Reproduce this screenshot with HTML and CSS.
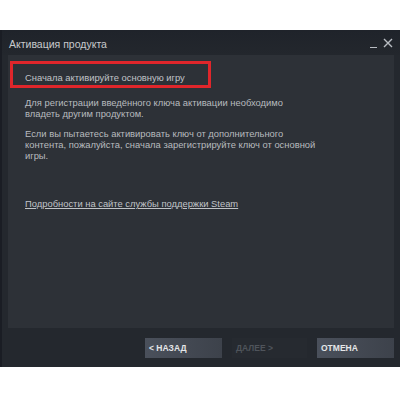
FILE: index.html
```html
<!DOCTYPE html>
<html lang="ru">

<head>
  <meta charset="UTF-8">
  <title>Активация продукта</title>
  <link rel="stylesheet" href="styles.css">
</head>

<body>
  <div class="dialog">
    <div class="title-bar">
      <span class="title">Активация продукта</span>
      <div class="window-btns">
        <span class="min-btn"></span>
        <svg class="close-btn" width="10" height="10" viewBox="0 0 10 10">
          <path d="M1 1 L9 9 M9 1 L1 9" stroke="#b8bcc2" stroke-width="1.4" fill="none" />
        </svg>
      </div>
    </div>

    <div class="panel">
      <div class="error-box">Сначала активируйте основную игру</div>
      <p>Для регистрации введённого ключа активации необходимо<br>владеть другим продуктом.</p>
      <p>Если вы пытаетесь активировать ключ от дополнительного<br>контента, пожалуйста, сначала зарегистрируйте ключ от основной<br>игры.</p>
      <a class="support-link" href="#">Подробности на сайте службы поддержки Steam</a>
    </div>

    <div class="footer">
      <button class="btn">&lt; НАЗАД</button>
      <button class="btn btn-disabled">ДАЛЕЕ &gt;</button>
      <button class="btn">ОТМЕНА</button>
    </div>
  </div>
</body>

</html>
```

FILE: styles.css
```css
body {
  margin: 0;
  background-color: #ffffff;
  font-family: Arial, "Liberation Sans", sans-serif;
  padding-top: 30px;
}

.dialog {
  width: 400px;
  height: 337px;
  background-color: #24282e;
  border-left: 2px solid #1a1d24;
  box-sizing: border-box;
  display: flex;
  flex-direction: column;
}

.title-bar {
  height: 25px;
  display: flex;
  align-items: center;
  justify-content: space-between;
  padding: 0 7px 0 7px;
  background: linear-gradient(#1f232a, #23272d);
}

.title {
  color: #c8cacd;
  font-size: 10.5px;
  margin-top: 2px;
}

.window-btns {
  display: flex;
  align-items: center;
  gap: 6px;
  margin-top: 1px;
}

.min-btn {
  width: 7px;
  height: 1px;
  background-color: #b8bcc2;
  margin-top: 8px;
}

.panel {
  margin: 0 6px 0 6px;
  height: 273px;
  background-color: #2d3137;
  padding: 6px 0 0 2px;
  box-sizing: border-box;
  color: #b8bbbf;
  font-size: 9.4px;
}

.error-box {
  width: 201px;
  height: 27px;
  border: 3px solid #e0262b;
  box-sizing: border-box;
  padding: 8px 0 0 12px;
  color: #c0c3c7;
  font-size: 9.4px;
  line-height: 11px;
}

p {
  margin: 9px 0 0 15px;
  line-height: 11px;
}

p + p {
  margin-top: 9px;
}

.support-link {
  display: inline-block;
  margin: 37px 0 0 15px;
  color: #c0c3c7;
  text-decoration: underline;
  font-size: 9.4px;
}

.footer {
  flex: 1;
  display: flex;
  justify-content: flex-end;
  align-items: flex-start;
  gap: 10px;
  padding: 10px 6px 0 0;
}

.btn {
  width: 77px;
  height: 20px;
  border: none;
  text-align: left;
  padding: 0 0 0 4px;
  font-family: Arial, "Liberation Sans", sans-serif;
  font-size: 8.5px;
  font-weight: bold;
  color: #e4e6e8;
  background: linear-gradient(90deg, #4a505b, #3d424b);
  cursor: pointer;
}

.btn-disabled {
  width: 75px;
  background: #262a30;
  color: #4f545b;
}
```
